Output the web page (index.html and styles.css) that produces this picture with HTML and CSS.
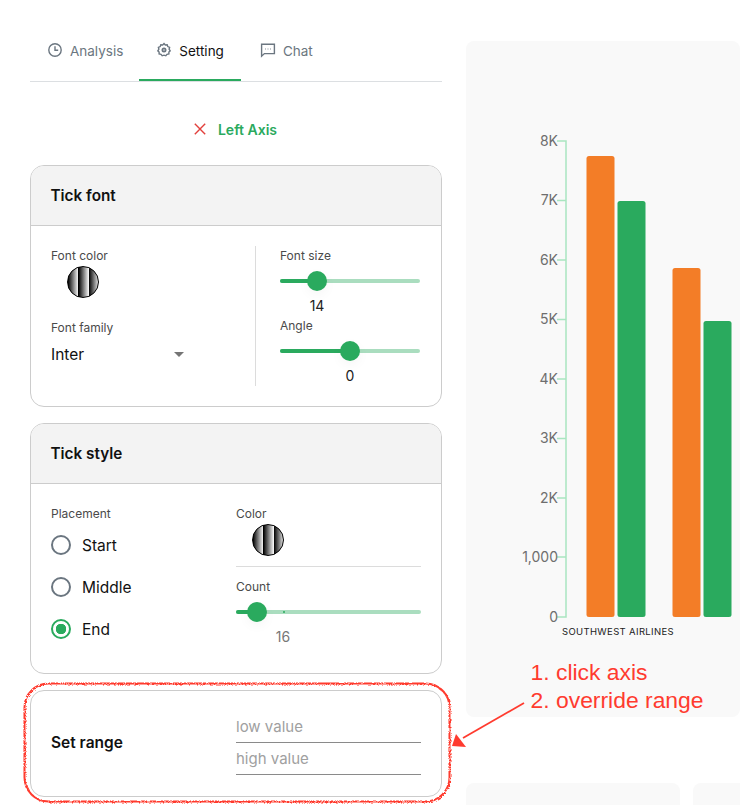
FILE: index.html
```html
<!DOCTYPE html>
<html lang="en">
  <head>
    <meta charset="UTF-8" />
    <meta name="viewport" content="width=device-width, initial-scale=1.0" />
    <title>Chart Settings</title>
    <link rel="stylesheet" href="styles.css">
  </head>
  <body>
    <div class="page">
      <div class="settings">
        <ul class="tabs">
          <li class="tab analysis-tab">
            <svg class="tab-icon" viewBox="0 0 16 16"><circle cx="8" cy="8" r="6.2" /><path d="M8 4.2V8.3H11.2" /></svg>
            Analysis
          </li>
          <li class="tab active">
            <svg class="tab-icon" viewBox="0 0 16 16"><path d="M8 1.600 9.300 3 11.200 2.800 11.800 4.600 13.600 5.400 13.100 7.200 14.200 8.800 12.900 10.100 12.900 12 11 12.300 9.800 13.800 8 13.200 6.200 13.800 5 12.300 3.100 12 3.100 10.100 1.800 8.800 2.900 7.200 2.400 5.400 4.200 4.600 4.800 2.800 6.700 3Z" /><circle class="gear-hub" cx="8" cy="8" r="1.600" /></svg>
            Setting
          </li>
          <li class="tab chat-tab">
            <svg class="tab-icon" viewBox="0 0 16 16"><path d="M1.600 2.200H14.400V11.600H4.400L1.600 14.200Z" /><path class="dots" d="M5 7H5.800M7.600 7H8.400M10.200 7H11" /></svg>
            Chat
          </li>
        </ul>

        <div class="axis-title">
          <svg class="close-icon" viewBox="0 0 12 12"><path d="M0.800 0.800 11.200 11.200M11.200 0.800 0.800 11.200" /></svg>
          <b>Left Axis</b>
        </div>

        <div class="cards">
          <section class="card">
            <h3 class="card-head">Tick font</h3>
            <div class="font-body">
              <div class="font-left">
                <div class="field-label">Font color</div>
                <div class="swatch"></div>
                <div class="field-label family-label">Font family</div>
                <div class="select">Inter<span class="caret"></span></div>
              </div>
              <div class="font-right">
                <div class="field-label">Font size</div>
                <div class="slider">
                  <div class="slider-fill" style="width: 37px"></div>
                  <div class="slider-thumb" style="left: 37px"></div>
                </div>
                <div class="slider-value" style="padding-left: 37px"><span>14</span></div>
                <div class="field-label">Angle</div>
                <div class="slider">
                  <div class="slider-fill" style="width: 70px"></div>
                  <div class="slider-thumb" style="left: 70px"></div>
                </div>
                <div class="slider-value" style="padding-left: 70px"><span>0</span></div>
              </div>
            </div>
          </section>

          <section class="card">
            <h3 class="card-head">Tick style</h3>
            <div class="style-body">
              <div class="style-left">
                <div class="field-label">Placement</div>
                <div class="radio"><span class="radio-mark"></span>Start</div>
                <div class="radio"><span class="radio-mark"></span>Middle</div>
                <div class="radio checked"><span class="radio-mark"></span>End</div>
              </div>
              <div class="style-right">
                <div class="field-label">Color</div>
                <div class="swatch"></div>
                <div class="rule"></div>
                <div class="field-label">Count</div>
                <div class="slider">
                  <div class="slider-fill" style="width: 21px"></div>
                  <div class="slider-mark" style="left: 47px"></div>
                  <div class="slider-thumb" style="left: 21px"></div>
                </div>
                <div class="slider-value muted" style="padding-left: 47px"><span>16</span></div>
              </div>
            </div>
          </section>

          <section class="card range-card">
            <h3 class="range-title">Set range</h3>
            <div class="range-inputs">
              <input type="text" placeholder="low value" />
              <input type="text" placeholder="high value" />
            </div>
          </section>
        </div>
      </div>

      <div class="preview">
        <div class="chart-panel">
          <svg class="chart" viewBox="466 41 274 676" width="274" height="676">
            <g class="axis">
              <path d="M557 141H566V617H557" />
              <path d="M557 200.500H566M557 260H566M557 319.500H566M557 379H566M557 438.500H566M557 498H566M557 557H566" />
            </g>
            <g class="tick-labels">
              <text x="558" y="146">8K</text>
              <text x="558" y="205">7K</text>
              <text x="558" y="265">6K</text>
              <text x="558" y="324">5K</text>
              <text x="558" y="384">4K</text>
              <text x="558" y="443">3K</text>
              <text x="558" y="503">2K</text>
              <text x="558" y="562">1,000</text>
              <text x="558" y="622">0</text>
            </g>
            <rect class="bar-orange" x="586.500" y="156" width="28" height="461" rx="2.500" />
            <rect class="bar-green" x="617.500" y="201" width="28" height="416" rx="2.500" />
            <rect class="bar-orange" x="672.500" y="268" width="28" height="349" rx="2.500" />
            <rect class="bar-green" x="703.500" y="321" width="28" height="296" rx="2.500" />
            <text class="category" x="562" y="635">SOUTHWEST AIRLINES</text>
          </svg>
        </div>
        <div class="thumbs">
          <div class="thumb-card"></div>
          <div class="thumb-card"></div>
        </div>
      </div>

      <svg class="markup" viewBox="0 0 740 805" width="740" height="805">
        <defs>
          <filter id="rough"><feTurbulence baseFrequency="0.9" numOctaves="1" seed="3" /><feDisplacementMap in="SourceGraphic" scale="1.200" /></filter>
        </defs>
        <rect class="outline" filter="url(#rough)" x="24.500" y="683.500" width="425" height="118" rx="24" />
        <path class="arrow-line" d="M524 703 463 738" />
        <path class="arrow-head" d="M452 746 456 734 466 747Z" />
      </svg>
      <div class="note">1. click axis<br />2. override range</div>
    </div>
  </body>
</html>
```

FILE: styles.css
```css
* {
  margin: 0;
  padding: 0;
  box-sizing: border-box;
  font-family: "Inter", sans-serif;
}

body {
  background: white;
}

.page {
  position: relative;
  display: flex;
  gap: 24px;
  width: 740px;
  height: 805px;
  padding: 20px 0 0 30px;
  overflow: hidden;
}

.settings {
  width: 412px;
  flex-shrink: 0;
}

.tabs {
  list-style: none;
  display: flex;
  height: 62px;
  border-bottom: 1px solid #dcdfe2;
}

.tab {
  display: flex;
  align-items: center;
  gap: 7px;
  height: 61px;
  padding: 0 17px;
  font-size: 13.5px;
  color: #6b7680;
}

.tab.active {
  color: #111;
  box-shadow: inset 0 -2px 0 #2aaa5e;
}

.analysis-tab {
  padding-right: 16px;
}

.chat-tab {
  padding-left: 19px;
}

.tab-icon {
  width: 16px;
  height: 16px;
  margin-top: -1px;
  fill: none;
  stroke: currentColor;
  stroke-width: 1.4;
}

.tab.active .tab-icon {
  stroke: #6b7680;
}

.gear-hub {
  stroke-width: 1.8;
}

.tab-icon .dots {
  stroke-width: 1.2;
}

.axis-title {
  display: flex;
  align-items: center;
  justify-content: center;
  gap: 12px;
  height: 24px;
  margin: 35px 1px 24px 0;
  font-size: 14px;
  color: #2aaa5e;
}

.axis-title b {
  font-weight: 600;
}

.close-icon {
  width: 12px;
  height: 12px;
  fill: none;
  stroke: #e2403c;
  stroke-width: 1.4;
}

.cards {
  display: flex;
  flex-direction: column;
  gap: 16px;
}

.card {
  border: 1px solid #cccccc;
  border-radius: 14px;
  overflow: hidden;
  background: white;
}

.card-head {
  display: flex;
  align-items: center;
  height: 60px;
  padding-left: 19.5px;
  background: #f3f3f3;
  border-bottom: 1px solid #cccccc;
  font-size: 15.3px;
  font-weight: 600;
  color: #111;
}

.field-label {
  height: 20px;
  line-height: 20px;
  font-size: 12px;
  color: #4a4a4a;
}

.swatch {
  width: 32px;
  height: 32px;
  margin-left: 16px;
  border: 1px solid #000;
  border-radius: 50%;
  background: repeating-linear-gradient(90deg, #000 0, #fff 10.5px);
}

.font-body {
  display: flex;
  height: 180px;
  padding: 20px 21px 20px 20px;
}

.font-left {
  width: 205px;
  border-right: 1px solid #dcdcdc;
}

.family-label {
  margin-top: 20px;
}

.select {
  position: relative;
  width: 133px;
  height: 24px;
  margin-top: 5px;
  line-height: 24px;
  font-size: 15.5px;
  color: #111;
}

.caret {
  position: absolute;
  right: 0;
  top: 9px;
  border-left: 5px solid transparent;
  border-right: 5px solid transparent;
  border-top: 5px solid #757575;
}

.font-right {
  flex: 1;
  padding-left: 24px;
}

.slider {
  position: relative;
  height: 20px;
  margin-top: 5px;
}

.slider::before {
  content: "";
  position: absolute;
  left: 0;
  right: 0;
  top: 8px;
  height: 4px;
  border-radius: 2px;
  background: #aaddbf;
}

.slider-fill {
  position: absolute;
  left: 0;
  top: 8px;
  height: 4px;
  border-radius: 2px;
  background: #2aaa5e;
}

.slider-mark {
  position: absolute;
  top: 9px;
  width: 2px;
  height: 2px;
  border-radius: 50%;
  background: #2aaa5e;
}

.slider-thumb {
  position: absolute;
  top: 0;
  width: 20px;
  height: 20px;
  margin-left: -10px;
  border-radius: 50%;
  background: #2aaa5e;
  box-shadow: 0 4px 12px rgba(0, 0, 0, 0.04);
}

.slider-value {
  height: 20px;
  margin-top: 5px;
  line-height: 20px;
  font-size: 14px;
  color: #222;
}

.slider-value span {
  display: flex;
  justify-content: center;
  width: 0;
}

.slider-value.muted {
  color: #777;
}

.style-body {
  display: flex;
  height: 189px;
  padding: 20px 20px 0 20px;
}

.style-left {
  width: 185px;
}

.radio {
  display: flex;
  align-items: center;
  gap: 11px;
  height: 42px;
  font-size: 15.5px;
  color: #111;
}

.radio-mark {
  width: 20px;
  height: 20px;
  border: 2px solid #6b7680;
  border-radius: 50%;
}

.radio.checked .radio-mark {
  border-color: #2aaa5e;
  background: radial-gradient(circle, #2aaa5e 5px, transparent 5.5px);
}

.style-right {
  width: 185px;
}

.rule {
  height: 1px;
  margin: 10px 0;
  background: #dcdcdc;
}

.range-card {
  display: flex;
  align-items: center;
  height: 107px;
  padding: 0 20px 2px;
}

.range-title {
  width: 185px;
  font-size: 15.5px;
  font-weight: 600;
  color: #111;
}

.range-inputs {
  width: 185px;
}

.range-inputs input {
  display: block;
  width: 100%;
  height: 32px;
  border: none;
  border-bottom: 1px solid #8a8a8a;
  outline: none;
  font-size: 15px;
}

.range-inputs input::placeholder {
  color: #a0a0a0;
}

.preview {
  flex: 1;
  min-width: 0;
  padding-top: 21px;
}

.chart-panel {
  height: 676px;
  border-radius: 8px;
  background: #f9f9f9;
  overflow: hidden;
}

.chart {
  display: block;
}

.axis path {
  fill: none;
  stroke: #a9e5c0;
  stroke-width: 1.5;
}

.tick-labels text {
  text-anchor: end;
  font-size: 14px;
  fill: #6e6e6e;
}

.bar-orange {
  fill: #f37d27;
}

.bar-green {
  fill: #2aaa5e;
}

.category {
  font-size: 9.5px;
  letter-spacing: 0.35px;
  fill: #222;
}

.thumbs {
  display: flex;
  gap: 13px;
  margin-top: 66px;
}

.thumb-card {
  flex-shrink: 0;
  width: 214px;
  height: 60px;
  border-radius: 8px;
  background: #f9f9f9;
}

.markup {
  position: absolute;
  left: 0;
  top: 0;
  pointer-events: none;
  fill: none;
}

.outline {
  stroke: #ff3b2f;
  stroke-width: 2;
}

.arrow-line {
  stroke: #ff3b2f;
  stroke-width: 1.8;
}

.arrow-head {
  fill: #ff3b2f;
}

.note {
  position: absolute;
  left: 530.5px;
  top: 658px;
  font-family: "Liberation Sans", sans-serif;
  font-size: 22.9px;
  line-height: 28px;
  color: #ff3b2f;
}
```
